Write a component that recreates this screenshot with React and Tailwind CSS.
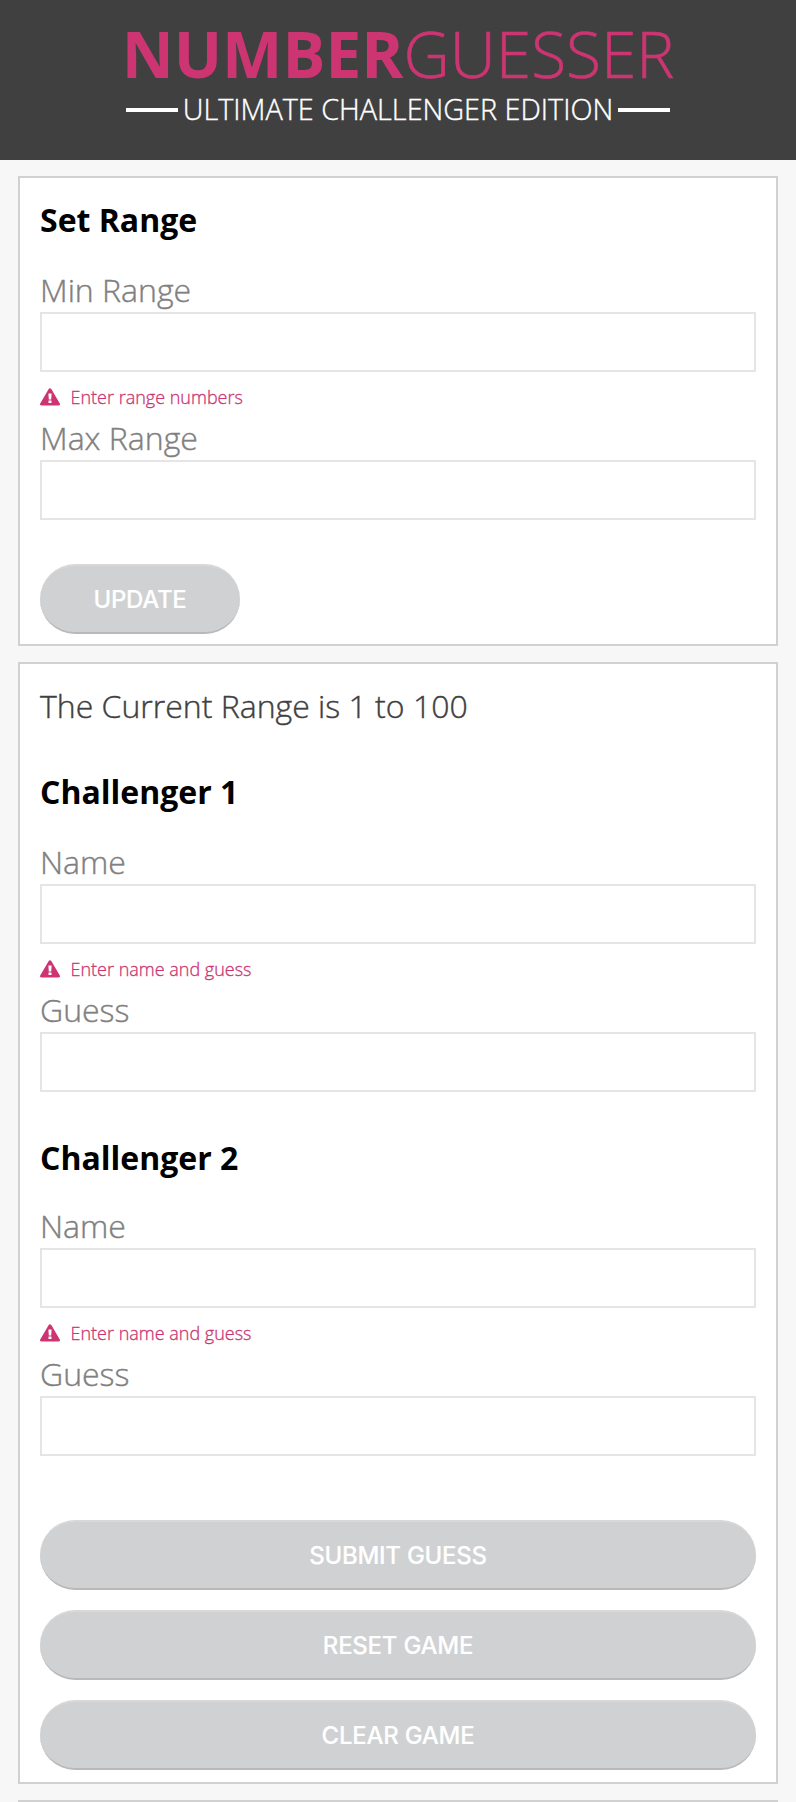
const warn = (
  <svg className="h-[18px] w-5 shrink-0" viewBox="0 0 20 18" fill="#cc3572">
    <path fillRule="evenodd" d="M8.7 1.1a1.5 1.5 0 0 1 2.6 0l8.5 14.4c.5.9 0 1.9-1.1 1.9H1.3C.2 17.400-.3 16.400.2 15.500zM8.400 5.400l.4 6h2.400l.4-6zM8.500 12.400h3v2.700h-3z" />
  </svg>
);

function Field({ label }) {
  return (
    <label className="block">
      <span className="block h-11 text-[32px] font-light leading-[44px] text-[#808080] [-webkit-text-stroke:0.4px_#808080]">{label}</span>
      <input className="block h-[60px] w-full border-2 border-[#e5e5e5] bg-white px-4 text-[32px] outline-none" />
    </label>
  );
}

function ErrorNote({ children }) {
  return (
    <div className="mb-[5px] mt-[11px] flex h-7 items-center gap-[10.5px] text-lg font-light leading-7 text-[#cc3572] [-webkit-text-stroke:0.3px_#cc3572]">
      {warn}
      <span>{children}</span>
    </div>
  );
}

function Button({ children, className = "" }) {
  return (
    <button
      className={`block h-[70px] rounded-[35px] border-y-2 border-t-[#d8d8d8] border-b-[#b9b9b9] bg-[#d0d1d2] pt-0.5 font-['Inter',sans-serif] text-2xl font-medium tracking-[-0.25px] text-white [-webkit-text-stroke:0.15px_white] ${className}`}
    >
      {children}
    </button>
  );
}

function Challenger({ number, headingGap }) {
  return (
    <section>
      <h2 className={`h-11 text-[32px] font-bold leading-[44px] text-black ${headingGap}`}>Challenger {number}</h2>
      <Field label="Name" />
      <ErrorNote>Enter name and guess</ErrorNote>
      <Field label="Guess" />
    </section>
  );
}

export default function App() {
  return (
    <div className="h-[1802px] overflow-hidden bg-[#f7f7f7] font-['Open_Sans',sans-serif]">
      <header className="flex h-40 flex-col items-center bg-[#404040] pt-[23px]">
        <h1 className="h-16 whitespace-nowrap text-[64px] font-light leading-[62px] text-[#cc3572]">
          <span className="font-bold">NUMBER</span>
          <span className="[-webkit-text-stroke:0.6px_#cc3572]">GUESSER</span>
        </h1>
        <div className="mt-[11px] flex h-6 items-center gap-[5px] text-white">
          <span className="h-1 w-[52px] bg-white" />
          <span className="whitespace-nowrap pb-0.5 text-[28.8px] font-light leading-6 [-webkit-text-stroke:0.4px_white]">ULTIMATE CHALLENGER EDITION</span>
          <span className="h-1 w-[52px] bg-white" />
        </div>
      </header>
      <main className="flex flex-col gap-4 px-[18px] pt-4">
        <section className="h-[470px] border-2 border-[#d1d1d1] bg-white px-5 pt-5">
          <h2 className="mb-[26px] h-11 text-[32px] font-bold leading-[44px] text-black">Set Range</h2>
          <Field label="Min Range" />
          <ErrorNote>Enter range numbers</ErrorNote>
          <Field label="Max Range" />
          <Button className="mt-11 w-[200px]">UPDATE</Button>
        </section>
        <section className="h-[1122px] border-2 border-[#d1d1d1] bg-white px-5 pt-5">
          <p className="mb-[42px] h-11 text-[32px] font-light leading-[44px] text-[#404040] [-webkit-text-stroke:0.4px_#404040]">
            The Current Range is 1 to 100
          </p>
          <div className="flex flex-col gap-11">
            <Challenger number={1} headingGap="mb-[26px]" />
            <Challenger number={2} headingGap="mb-6" />
          </div>
          <div className="mt-16 flex flex-col gap-5">
            <Button className="w-full">SUBMIT GUESS</Button>
            <Button className="w-full">RESET GAME</Button>
            <Button className="w-full">CLEAR GAME</Button>
          </div>
        </section>
        <section className="h-20 border-2 border-[#d1d1d1] bg-white" />
      </main>
    </div>
  );
}
